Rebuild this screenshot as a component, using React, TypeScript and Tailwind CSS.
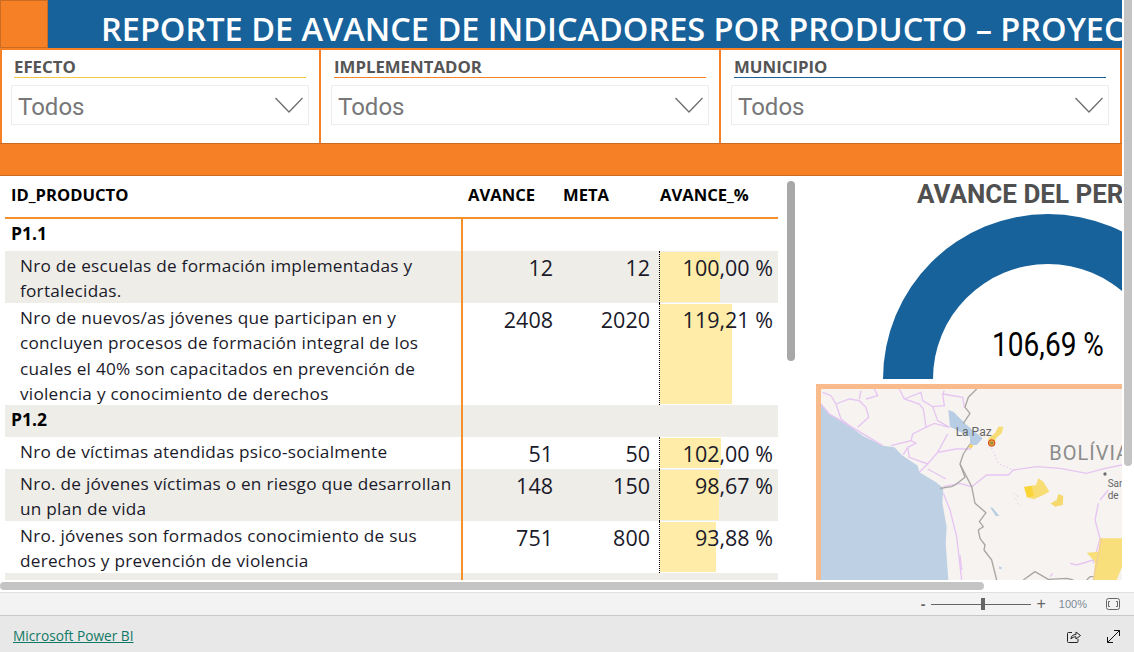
const font = "font-['Open_Sans',sans-serif]";

type Row = { name: string; avance: number; meta: number; pct: string; val: number; h: string; gray: boolean };
type Group = { id: string; gray: boolean; rows: Row[] };

const groups: Group[] = [
  {
    id: "P1.1",
    gray: false,
    rows: [
      { name: "Nro de escuelas de formación implementadas y fortalecidas.", avance: 12, meta: 12, pct: "100,00 %", val: 100, h: "h-[52px]", gray: true },
      { name: "Nro de nuevos/as jóvenes que participan en y concluyen procesos de formación integral de los cuales el 40% son capacitados en prevención de violencia y conocimiento de derechos", avance: 2408, meta: 2020, pct: "119,21 %", val: 119.21, h: "h-[102px]", gray: false },
    ],
  },
  {
    id: "P1.2",
    gray: true,
    rows: [
      { name: "Nro de víctimas atendidas psico-socialmente", avance: 51, meta: 50, pct: "102,00 %", val: 102, h: "h-[32px]", gray: false },
      { name: "Nro. de jóvenes víctimas o en riesgo que desarrollan un plan de vida", avance: 148, meta: 150, pct: "98,67 %", val: 98.67, h: "h-[52px]", gray: true },
      { name: "Nro. jóvenes son formados conocimiento de sus derechos y prevención de violencia", avance: 751, meta: 800, pct: "93,88 %", val: 93.88, h: "h-[52px]", gray: false },
    ],
  },
];

function Slicer({ label, line, box }: { label: string; line: string; box: string }) {
  return (
    <div className={`${box} h-full border-l-2 border-[#f58025]`}>
      <div className={`mx-[3px] h-[28px] border-b ${line} flex items-end text-[16.8px] leading-[20px] font-bold text-[#555555] ${font}`}>
        {label}
      </div>
      <div className="mt-[7px] h-[40px] border border-[#ececec] flex items-center justify-between pl-[6px] pr-[5px]">
        <span className="font-['Roboto',sans-serif] text-[24px] pt-[3px] text-[#777777]">Todos</span>
        <svg width="28" height="16" viewBox="0 0 28 16" fill="none" stroke="#6e6e6e" strokeWidth="1.3">
          <path d="M0.5 1 L14 15 L27.5 1" />
        </svg>
      </div>
    </div>
  );
}

function DataRow({ row }: { row: Row }) {
  return (
    <div className={`flex ${row.h} ${row.gray ? "bg-[#eeede8]" : "bg-white"} ${font} text-[#1a1a2a]`}>
      <div className="w-[458px] border-r-2 border-[#f5902a] pl-[15px] pr-[6px] text-[17.2px] tracking-[0.25px] leading-[25.4px] pt-[2px]">
        {row.name}
      </div>
      <div className="w-[90px] text-right text-[21.5px] leading-[30px] pt-[2px]">{row.avance}</div>
      <div className="w-[97px] text-right text-[21.5px] leading-[30px] pt-[2px]">{row.meta}</div>
      <div className="w-[9px]" />
      <div className="relative flex-1 border-l border-dotted border-black">
        <div className="absolute left-0 top-[1px] bottom-[1px] bg-[#feeca8]" style={{ width: row.val * 0.6 }} />
        <div className="relative pr-[5px] text-right text-[21.5px] leading-[30px] pt-[2px]">{row.pct}</div>
      </div>
    </div>
  );
}

function Table() {
  return (
    <div className="w-[778px] pl-[5px] shrink-0">
      <div className={`h-[43px] pb-[3px] border-b-2 border-[#f5902a] flex items-center text-[16.6px] font-bold text-black ${font}`}>
        <div className="w-[463px] pl-[6px]">ID_PRODUCTO</div>
        <div className="w-[95px]">AVANCE</div>
        <div className="w-[97px]">META</div>
        <div>AVANCE_%</div>
      </div>
      {groups.map((g) => (
        <div key={g.id}>
          <div className={`flex h-[32px] ${g.gray ? "bg-[#eeede8]" : "bg-white"}`}>
            <div className={`w-[458px] border-r-2 border-[#f5902a] pl-[6px] text-[17.5px] leading-[29px] font-bold text-black ${font}`}>
              {g.id}
            </div>
          </div>
          {g.rows.map((r) => (
            <DataRow key={r.name} row={r} />
          ))}
        </div>
      ))}
      <div className="flex h-[7px] bg-[#eeede8]">
        <div className="w-[458px] border-r-2 border-[#f5902a]" />
      </div>
    </div>
  );
}

function MapPanel() {
  return (
    <div className="h-[196px] border-l-[5px] border-t-[5px] border-[#f9bb8c] overflow-hidden">
      <svg width="301" height="191" viewBox="123 57 903 573" fill="none">
        <rect x="123" y="57" width="903" height="573" fill="#f6f3f0" />
        <path d="M123 102 L148 132 L168 142 L208 167 L248 197 L308 227 L343 232 L368 257 L413 287 L418 307 L468 337 L490 355 L487 400 L500 470 L497 520 L505 630 L123 630 Z" fill="#bdd0e4" />
        <g stroke="#e6c5f2" strokeWidth="4">
          <path transform="translate(108,42)" d="M20 25 L45 35 L60 60 L100 45 L130 50 L150 70 L158 100 L125 130 M60 60 L75 105 L100 125 M130 45 L135 20 M150 45 L185 35 L175 15 M250 15 L265 45 L310 60 L322 75 L330 130 L290 150 L285 170 L225 185 M265 45 L315 25 L320 50 L350 68 L385 65 L380 30 L385 20 M380 30 L440 40 L445 70 M350 68 L365 110 L400 130 M330 130 L355 118 L400 130 M285 170 L300 178 L275 190 L262 212 M275 190 L280 220 L335 240 M395 150 L365 205 L335 240 L310 265 M365 205 L420 195 L465 195 M335 255 L390 285" />
          <path d="M15 60 L40 90 L100 125 L200 185" transform="translate(108,42)" />
          <path d="M490 370 L510 420 L530 500 L545 630 M490 350 L540 340 L575 350 L620 315 L685 315 L700 300 L770 290 L840 295 L920 310 L975 295 L1026 285" />
          <path transform="translate(540,330)" d="M415 70 L405 120 L420 175 L400 250 M420 60 L445 30 M330 250 L350 255 L400 240 M0 225 L5 270 M270 290 L278 280" />
          <path d="M635 235 L655 280 L700 300" strokeDasharray="3 8" />
        </g>
        <path d="M505 120 L520 125 L560 165 L608 205 L590 225 L570 225 L570 200 L510 170 Z" fill="#b7cde4" />
        <path transform="translate(540,330)" d="M90 82 L98 84 L118 108 L108 108 Z M117 259 L125 262 L124 268 L118 267 Z" fill="#b7cde4" />
        <path transform="translate(540,330)" d="M160 38 L166 45 M165 55 L172 62 M172 70 L180 76 M170 45 L176 52" stroke="#b7cde4" strokeWidth="3" strokeDasharray="2 3" />
        <g stroke="#a9a6a3" strokeWidth="4" strokeLinejoin="round">
          <path d="M590 57 L565 82 L555 112 L570 130 L550 160" />
          <path d="M570 222 L550 252 L540 282 L555 322 L525 345 L515 350 L480 355" />
          <path d="M540 282 L575 350 L585 400 L618 428 L598 455 L610 470 L595 480 L600 505 L615 525 L612 540 L635 570 L650 630" />
          <path transform="translate(540,330)" d="M190 300 L225 275 L265 298 L320 295 L340 300 M380 300 L390 290 L460 290 L460 300" />
        </g>
        <path d="M570 222 L580 226 L574 236 L566 232 Z" fill="#f7d46a" />
        <path d="M625 205 L645 190 L655 170 L670 170 L665 190 L648 205 L642 228 L625 222 Z" fill="#f7dc74" />
        <circle cx="635" cy="219" r="10" fill="#d9a030" stroke="#d7301f" strokeWidth="2.5" />
        <circle cx="635" cy="219" r="4" fill="#8c8a50" />
        <path d="M732 350 L768 345 L775 325 L790 335 L808 365 L790 375 L762 388 L740 382 Z" fill="#f8dd74" />
        <path d="M733 352 L755 348 L762 378 L742 382 Z" fill="#fbd535" />
        <path d="M812 400 L830 390 L835 372 L850 378 L848 405 L825 410 Z" fill="#f5d96f" />
        <path d="M960 505 L1026 505 L1026 590 L1010 630 L940 630 L945 575 L920 548 L955 545 Z" fill="#f8df7c" />
        <path d="M965 505 L940 630" stroke="#efc9a0" strokeWidth="3" />
        <circle cx="975" cy="312" r="5" fill="#6e6e6e" />
        <g className="font-['Roboto',sans-serif]">
          <text x="527" y="197" fontSize="36" fill="#666666">La Paz</text>
          <text x="808" y="270" fontSize="60" fill="#8c8c8c" letterSpacing="3">BOLÍVIA</text>
          <text x="983" y="351" fontSize="30" fill="#666666">San</text>
          <text x="983" y="387" fontSize="30" fill="#666666">de</text>
        </g>
      </svg>
    </div>
  );
}

function Gauge() {
  return (
    <div className="w-[306px] ml-[38px]">
      <div className="h-[38px] overflow-hidden whitespace-nowrap pl-[101px] font-['Roboto',sans-serif] font-bold text-[26px] leading-[36px] text-[#505050]">
        AVANCE DEL PERÍODO
      </div>
      <div className="relative h-[170px]">
        <svg width="306" height="165" viewBox="0 0 306 165">
          <path d="M67 165 A165 165 0 0 1 397 165 L347 165 A115 115 0 0 0 117 165 Z" fill="#17629b" />
        </svg>
        <div className="absolute left-[132px] w-[200px] top-[113px] text-center font-['Roboto',sans-serif] text-[33px] leading-[36px] text-black scale-x-[0.85]">
          106,69 %
        </div>
      </div>
      <MapPanel />
    </div>
  );
}

export default function App() {
  return (
    <div className="relative w-[1134px] h-[652px] overflow-hidden bg-white flex flex-col">
      <div className="h-[592px] w-[1122px] shrink-0 overflow-hidden">
        <div className="h-[48px] flex bg-[#17629b] overflow-hidden">
          <div className="w-[48px] h-[48px] shrink-0 bg-[#f58025] border border-[#c96b20]" />
          <div className={`pl-[53px] whitespace-nowrap text-white font-semibold text-[32.5px] leading-[58px] ${font}`}>
            REPORTE DE AVANCE DE INDICADORES POR PRODUCTO – PROYECTO
          </div>
        </div>
        <div className="flex h-[95px] border-t-2 border-[#f58025]">
          <Slicer label="EFECTO" line="border-[#f5c842]" box="w-[319px] pl-[9px] pr-[10px]" />
          <Slicer label="IMPLEMENTADOR" line="border-[#f58025]" box="w-[400px] pl-[10px] pr-[10px]" />
          <div className="flex-1 h-full border-r-2 border-[#f58025]">
            <Slicer label="MUNICIPIO" line="border-[#17629b]" box="w-full pl-[10px] pr-[11px]" />
          </div>
        </div>
        <div className="h-[33px] bg-[#f58025] border-y border-[#c96b20]" />
        <div className="relative flex">
          <Table />
          <Gauge />
          <div className="absolute left-[787px] top-[5px] w-[8px] h-[180px] rounded-[4px] bg-[#a8a8a8]" />
        </div>
      </div>

      <div className="h-[24px] shrink-0 border-y border-t-[#e0e0e0] border-b-[#c8c8c8] bg-[#f3f3f3] flex items-center justify-end pr-[14px] font-['Liberation_Sans',sans-serif]">
        <span className="text-[14px] font-bold text-[#666666] mr-[5px] leading-none">-</span>
        <div className="relative w-[100px] h-[1px] bg-[#666666]">
          <div className="absolute left-[50px] top-[-6px] w-[4px] h-[12px] bg-[#666666]" />
        </div>
        <span className="text-[16px] text-[#666666] ml-[6px] leading-none">+</span>
        <span className="text-[11px] text-[#7d8a96] ml-[13px] leading-none">100%</span>
        <svg className="ml-[19px]" width="14" height="12" viewBox="0 0 14 12" fill="none" stroke="#666666">
          <rect x="0.5" y="0.5" width="13" height="11" rx="2" />
          <path d="M4 3.5 H2.5 V8.5 H4 M10 3.5 H11.5 V8.5 H10" />
        </svg>
      </div>
      <div className="flex-1 bg-[#e8e8e8] flex items-center justify-between pl-[13px] pr-[14px] pt-[5px]">
        <a className={`text-[#117865] underline text-[13.7px] ${font}`}>Microsoft Power BI</a>
        <div className="flex items-center gap-[26px]">
          <svg width="14" height="14" viewBox="0 0 14 14" fill="none" stroke="#222222" strokeWidth="1">
            <path d="M5 2.5 H1.5 A1 1 0 0 0 0.5 3.5 V11.5 A1 1 0 0 0 1.5 12.5 H10 A1 1 0 0 0 11 11.5 V9" />
            <path d="M4 9 C4 6 6 4.5 9 4.5 V2 L13.5 5.5 L9 9 V6.8 C7 6.8 5 7.5 4 9 Z" />
          </svg>
          <svg width="13" height="13" viewBox="0 0 13 13" fill="none" stroke="#111111" strokeWidth="1">
            <path d="M0.5 12.5 L12.5 0.5 M7 0.5 H12.5 V6 M0.5 7 V12.5 H6" />
          </svg>
        </div>
      </div>

      <div className="absolute right-[2px] top-0 w-[8px] h-[466px] rounded-b-[4px] bg-[#c4c4c4]" />
      <div className="absolute left-0 top-[582px] w-[984px] h-[8px] rounded-[4px] bg-[#c4c4c4]" />
    </div>
  );
}
